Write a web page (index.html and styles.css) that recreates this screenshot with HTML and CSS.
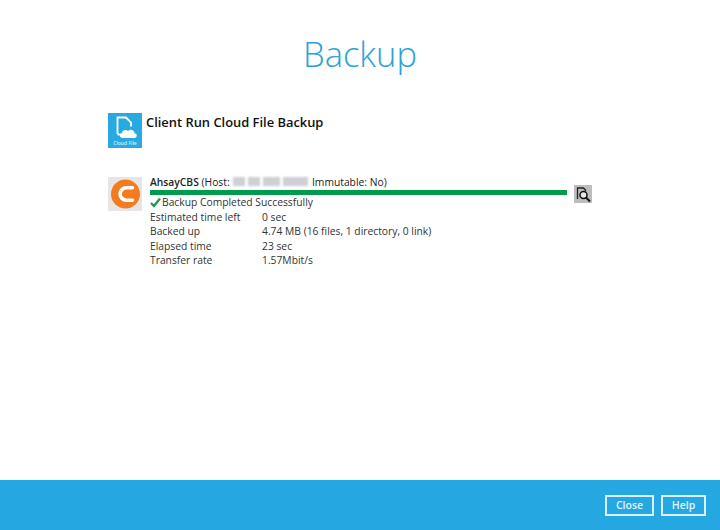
FILE: index.html
```html
<html>
<head>
  <meta charset="UTF-8">
  <title>Backup</title>
  <link rel="stylesheet" href="styles.css">
</head>
<body>
  <div class="page">
    <h1 class="page-title">Backup</h1>

    <div class="set-header">
      <svg class="set-icon" width="34" height="35" viewBox="0 0 34 35">
        <rect width="34" height="35" fill="#29a9e1"/>
        <path d="M9.500 21V4.500h8.500l5 5v4" fill="none" stroke="#fff" stroke-width="1.800"/>
        <path d="M9.500 21.500h5" stroke="#fff" stroke-width="1.800"/>
        <path d="M14.500 25c-3.500 0-3.500-4.500-.5-4.800 0-3 4-4.200 6-2.200 2.500-2.400 6.500-.8 6.500 2.300 3 .2 3 4.700 0 4.700z" fill="#fff"/>
        <text class="set-icon-label" x="17" y="32" text-anchor="middle">Cloud File</text>
      </svg>
      <h2 class="set-name">Client Run Cloud File Backup</h2>
    </div>

    <div class="dest">
      <div class="dest-logo">
        <svg width="34" height="34" viewBox="0 0 34 34">
          <rect width="34" height="34" fill="#e6e6e6"/>
          <circle cx="17.500" cy="17" r="14.500" fill="#f47b20"/>
          <path d="M24.500 10.800h-6.200a6.200 6.200 0 0 0 0 12.400h6.200" fill="none" stroke="#fff" stroke-width="3.600" stroke-linecap="round"/>
        </svg>
      </div>
      <div class="dest-body">
        <div class="dest-title">
          <b>AhsayCBS</b> (Host:
          <span class="blurred"><i class="s"></i><i class="s"></i><i class="m"></i><i class="l"></i></span>
          Immutable: No)
        </div>
        <div class="progress-row">
          <div class="progress-bar"></div>
          <svg class="detail-icon" width="18" height="18" viewBox="0 0 18 18">
            <rect width="18" height="18" fill="#bdbdbd"/>
            <path d="M3.500 14V3h6l2 2v1.500" fill="none" stroke="#222" stroke-width="1.300"/>
            <circle cx="9.500" cy="10" r="3.500" fill="#e8e8e8" stroke="#111" stroke-width="1.500"/>
            <path d="M12 12.500l4 4" stroke="#111" stroke-width="2"/>
          </svg>
        </div>
        <div class="status">
          <svg width="11" height="11" viewBox="0 0 11 11">
            <path d="M1 6l3 3 6-7.500" fill="none" stroke="#1e9b50" stroke-width="2.400"/>
          </svg>
          <span>Backup Completed Successfully</span>
        </div>
        <div class="stats">
          <div>Estimated time left</div><div>0 sec</div>
          <div>Backed up</div><div>4.74 MB (16 files, 1 directory, 0 link)</div>
          <div>Elapsed time</div><div>23 sec</div>
          <div>Transfer rate</div><div>1.57Mbit/s</div>
        </div>
      </div>
    </div>
  </div>

  <div class="footer">
    <button class="btn btn-close">Close</button>
    <button class="btn btn-help">Help</button>
  </div>
</body>
</html>
```
FILE: styles.css
```css
* {
  margin: 0;
  padding: 0;
  box-sizing: border-box;
  font-family: 'Open Sans', 'Noto Sans', sans-serif;
}

body {
  background: #ffffff;
  color: #333333;
  width: 720px;
  height: 530px;
  overflow: hidden;
  display: flex;
  flex-direction: column;
}

.page {
  flex: 1;
  padding: 0 128px 0 108px;
}

.page-title {
  color: #29a3d8;
  font-size: 34.500px;
  font-weight: 300;
  line-height: 50px;
  text-align: center;
  padding-top: 29px;
  padding-left: 20px;
  height: 113px;
}

.set-header {
  display: flex;
  gap: 4px;
  height: 64px;
}

.set-icon-label {
  fill: #d5effa;
  font-size: 5px;
  font-weight: 600;
}

.set-name {
  color: #111111;
  font-size: 12.900px;
  font-weight: 600;
  line-height: 18px;
}

.dest {
  display: flex;
  gap: 8px;
}

.dest-body {
  flex: 1;
  font-size: 10.300px;
  line-height: 14.400px;
}

.dest-title {
  color: #222222;
  height: 13px;
  margin-top: -2px;
  padding-bottom: 1px;
  white-space: nowrap;
}

.dest-title b {
  font-weight: 600;
}

.blurred {
  display: inline-flex;
  gap: 3px;
  margin: 0 1px;
  filter: blur(1px);
}

.blurred i {
  display: block;
  height: 9px;
  background: #cfcfd4;
}

.blurred i.s {
  width: 12px;
}

.blurred i.m {
  width: 17px;
}

.blurred i.l {
  width: 25px;
}

.progress-row {
  display: flex;
  align-items: flex-start;
  gap: 7px;
  height: 7px;
  margin-top: 1px;
}

.progress-bar {
  flex: 1;
  height: 5px;
  margin-top: 1px;
  background: #009b4d;
}

.detail-icon {
  margin-top: -4px;
  flex: none;
}

.status {
  display: flex;
  align-items: center;
  gap: 1px;
  height: 15px;
  margin-top: -1px;
}

.stats {
  display: grid;
  grid-template-columns: 112px 1fr;
}

.footer {
  height: 50px;
  background: #25a7e1;
  display: flex;
  justify-content: flex-end;
  align-items: center;
  gap: 7px;
  padding: 0 14px 0 0;
}

.btn {
  height: 21px;
  background: transparent;
  border: 2px solid #d8f1fb;
  color: #e4f5fc;
  font-size: 10.500px;
  font-weight: 600;
}

.btn-close {
  width: 49px;
}

.btn-help {
  width: 45px;
}
```
